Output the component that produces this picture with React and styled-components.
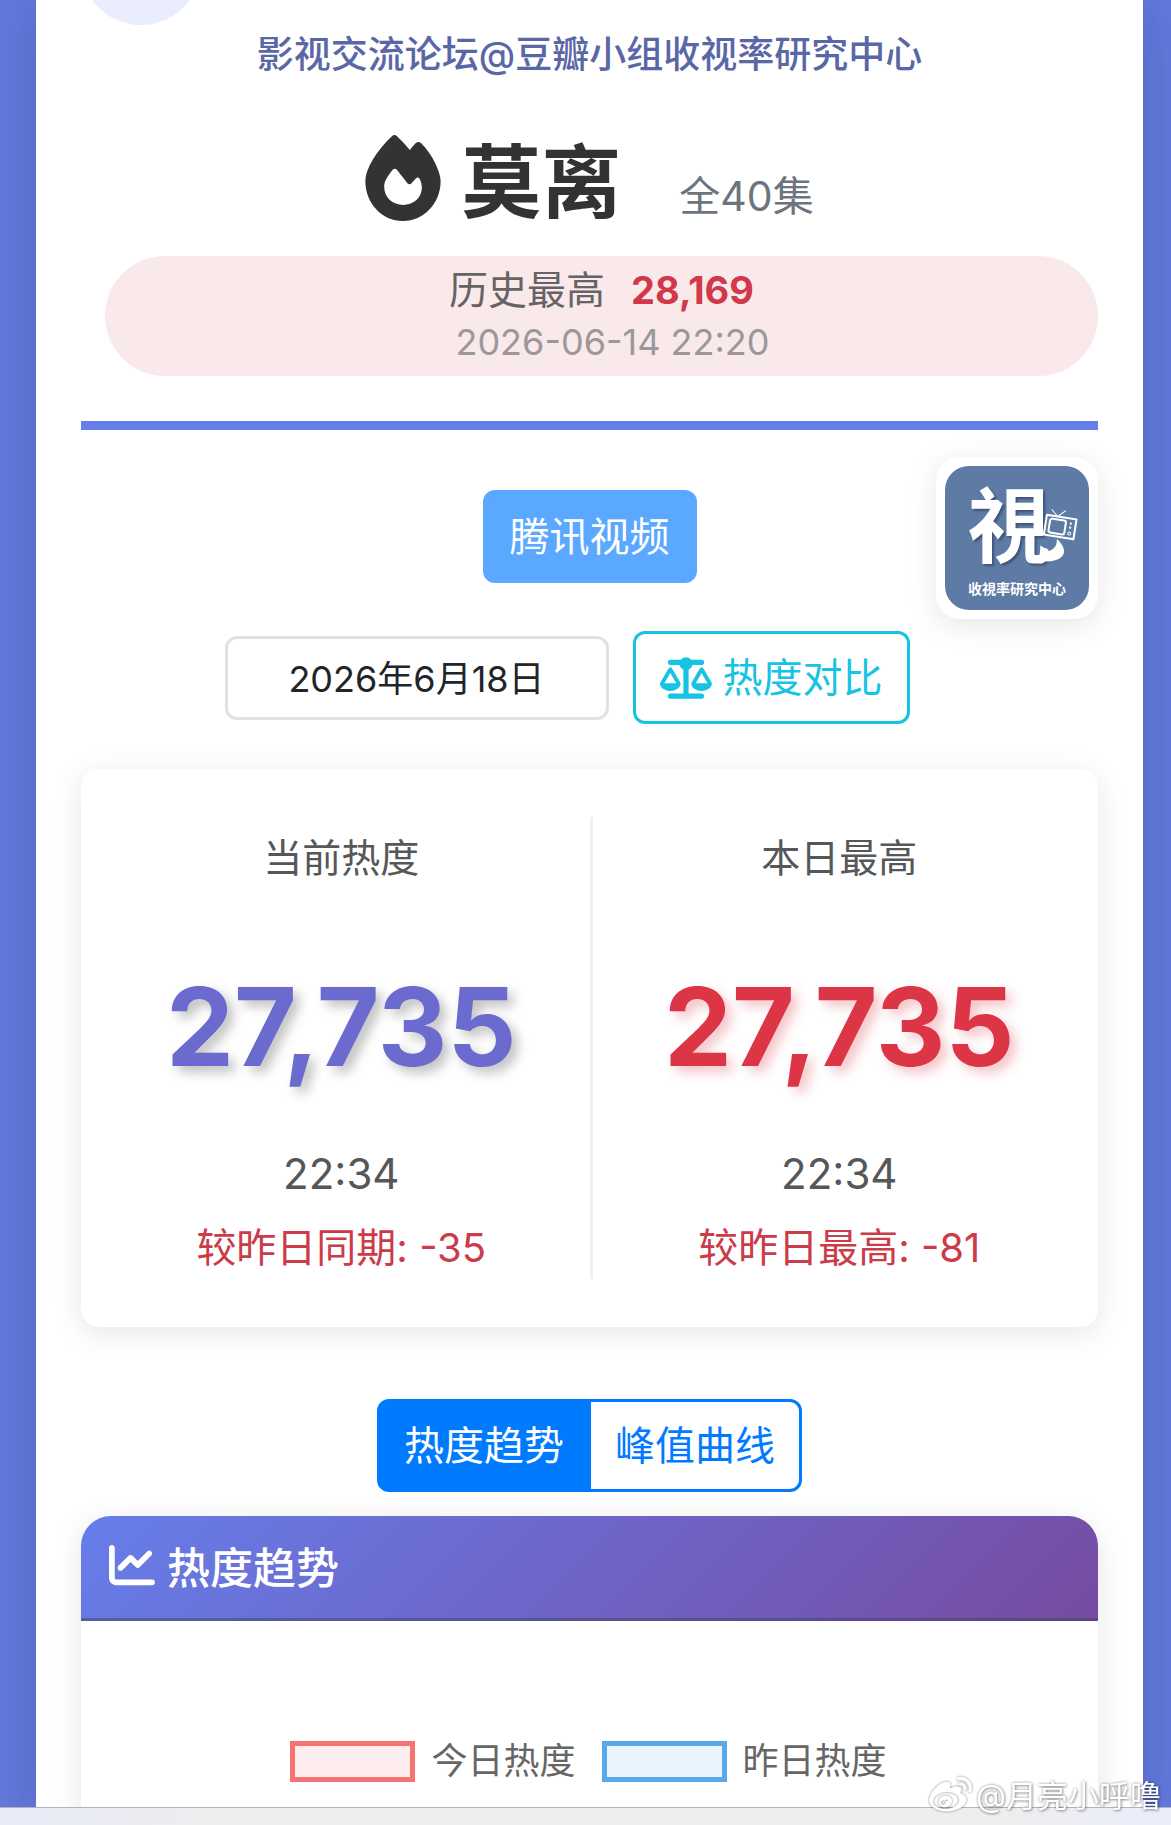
import styled, { createGlobalStyle, css } from "styled-components";
import { FaFire, FaScaleBalanced, FaChartLine, FaWeibo } from "react-icons/fa6";

const theme = {
  colors: {
    primary: "#667eea",
    blue: "#007bff",
    sky: "#5aa8ff",
    cyan: "#17c3e2",
    red: "#dc3545",
    purple: "#6b6bcf",
    dark: "#333333",
    text: "#555759",
    muted: "#6c757d",
    border: "#dee2e6",
    white: "#ffffff",
  },
  gradient: "linear-gradient(135deg, #667eea 0%, #764ba2 100%)",
  radius: { small: "12px", medium: "18px", large: "30px" },
  shadow: "0 6px 30px rgba(0, 0, 0, 0.1)",
};

const stats = [
  {
    id: "current",
    label: "当前热度",
    value: "27,735",
    time: "22:34",
    delta: "较昨日同期: -35",
    color: theme.colors.purple,
    glow: "rgba(0, 0, 0, 0.25)",
  },
  {
    id: "highest",
    label: "本日最高",
    value: "27,735",
    time: "22:34",
    delta: "较昨日最高: -81",
    color: theme.colors.red,
    glow: "rgba(220, 53, 69, 0.3)",
  },
];

const legends = [
  { id: "today", label: "今日热度", color: "#f87272", fill: "#fdedef" },
  { id: "yesterday", label: "昨日热度", color: "#59a9ea", fill: "#eaf4fc" },
];

export default function App() {
  return (
    <PageStyled>
      <GlobalStyle />
      <PanelStyled>
        <Header />
        <Toolbar />
        <StatsStyled>
          {stats.map((stat) => (
            <Stat key={stat.id} {...stat} />
          ))}
        </StatsStyled>
        <TabsStyled>
          <TabButton $isActive>热度趋势</TabButton>
          <TabButton>峰值曲线</TabButton>
        </TabsStyled>
        <ChartCard />
      </PanelStyled>
      <BottomBar />
      <WatermarkStyled>
        <FaWeibo className="icon" />
        <span>@月亮小呼噜</span>
      </WatermarkStyled>
    </PageStyled>
  );
}

function Header() {
  return (
    <HeaderStyled>
      <div className="bubble" />
      <p className="source">影视交流论坛@豆瓣小组收视率研究中心</p>
      <div className="title-row">
        <FaFire className="icon" />
        <h1>莫离</h1>
        <span className="episodes">全40集</span>
      </div>
      <div className="record">
        <div className="record-line">
          <span>历史最高</span>
          <strong>28,169</strong>
        </div>
        <div className="record-date">2026-06-14 22:20</div>
      </div>
    </HeaderStyled>
  );
}

function Toolbar() {
  return (
    <ToolbarStyled>
      <PlatformButton>腾讯视频</PlatformButton>
      <div className="controls">
        <DateInput type="text" aria-label="日期" defaultValue="2026年6月18日" />
        <CompareButton>
          <FaScaleBalanced className="icon" />
          <span>热度对比</span>
        </CompareButton>
      </div>
      <LogoStyled>
        <Logo />
      </LogoStyled>
    </ToolbarStyled>
  );
}

function Logo() {
  return (
    <svg viewBox="0 0 144 144" role="img" aria-label="收視率研究中心">
      <rect width="144" height="144" rx="24" fill="#5e7ba6" />
      <text x="23" y="90" className="mark" fill="#fff">
        視
      </text>
      {/* tail of the last stroke, running under the television */}
      <path
        d="M96 95 C110 97 120 92 119 84 C118 79 115 76 112 73 C112 81 108 86 96 86 Z"
        fill="#fff"
      />
      <g
        transform="rotate(9 115 62)"
        fill="none"
        stroke="#fff"
        strokeWidth="2"
        strokeLinejoin="round"
      >
        <path d="M104 45 L111 51 L118 44" strokeWidth="1" />
        <rect x="100" y="51" width="30" height="20" fill="#5e7ba6" />
        <rect x="104" y="54" width="16" height="14" rx="2" />
        <circle cx="125" cy="66" r="1.5" strokeWidth="1" />
        <path d="M124 56h2M124 60h2" />
      </g>
      <text x="72" y="128" textAnchor="middle" className="name" fill="#fff">
        收視率研究中心
      </text>
    </svg>
  );
}

function Stat({ label, value, time, delta, color, glow }) {
  return (
    <StatStyled $color={color} $glow={glow}>
      <div className="label">{label}</div>
      <div className="value">{value}</div>
      <div className="time">{time}</div>
      <div className="delta">{delta}</div>
    </StatStyled>
  );
}

function ChartCard() {
  return (
    <ChartCardStyled>
      <h2>
        <FaChartLine className="icon" />
        <span>热度趋势</span>
      </h2>
      <div className="legends">
        {legends.map(({ id, label, color, fill }) => (
          <LegendStyled key={id} $color={color} $fill={fill}>
            <i />
            <span>{label}</span>
          </LegendStyled>
        ))}
      </div>
    </ChartCardStyled>
  );
}

const GlobalStyle = createGlobalStyle`
  * {
    box-sizing: border-box;
  }

  body {
    margin: 0;
    background: #637adf;
    font-family: Inter, "Noto Sans CJK SC", sans-serif;
  }

  h1, h2, p {
    margin: 0;
  }

  button, input {
    font-family: inherit;
  }
`;

const PageStyled = styled.div`
  height: 100vh;
  display: flex;
  padding: 0 28px 0 36px;
  overflow: hidden;
`;

const PanelStyled = styled.main`
  flex: 1;
  min-width: 0;
  display: flex;
  flex-direction: column;
  padding: 0 45px;
  background: ${theme.colors.white};
  box-shadow: 0 0 60px rgba(0, 0, 0, 0.16);
`;

const HeaderStyled = styled.header`
  position: relative;
  padding: 30px 0 45px;
  border-bottom: 9px solid ${theme.colors.primary};
  text-align: center;

  .bubble {
    position: absolute;
    top: -95px;
    left: 0;
    width: 120px;
    height: 120px;
    border-radius: 50%;
    background: #e9edfc;
  }

  .source {
    font-size: 37px;
    line-height: 50px;
    font-weight: 500;
    color: #5a67a6;
  }

  .title-row {
    display: flex;
    justify-content: center;
    align-items: flex-end;
    margin-top: 54px;
    color: ${theme.colors.dark};

    .icon {
      width: 76px;
      height: 86px;
      margin: 0 20px 9px 0;
    }

    h1 {
      font-size: 80px;
      line-height: 96px;
      font-weight: 700;
    }

    .episodes {
      margin-left: 58px;
      font-size: 41px;
      line-height: 68px;
      color: ${theme.colors.muted};
    }
  }

  .record {
    margin: 26px 0 0 24px;
    padding: 8px 0;
    border-radius: 60px;
    background: #fae9eb;
    line-height: 52px;
  }

  .record-line {
    display: flex;
    justify-content: center;
    gap: 26px;
    font-size: 39px;
    color: #666364;

    strong {
      font-size: 38px;
      font-weight: 700;
      color: #d1394a;
    }
  }

  .record-date {
    padding-left: 22px;
    font-size: 36px;
    color: #9c9899;
  }
`;

const ToolbarStyled = styled.section`
  position: relative;
  display: flex;
  flex-direction: column;
  align-items: center;
  gap: 48px;
  padding: 60px 0 45px;

  .controls {
    display: flex;
    align-items: center;
    gap: 24px;
    margin-right: 45px;
  }
`;

const buttonStyle = css`
  height: 93px;
  padding: 0 24px;
  border: 3px solid;
  border-radius: ${theme.radius.small};
  font-size: 40px;
  line-height: 60px;
  cursor: pointer;
`;

const PlatformButton = styled.button`
  ${buttonStyle}
  border-color: ${theme.colors.sky};
  background: ${theme.colors.sky};
  color: ${theme.colors.white};
`;

const CompareButton = styled.button`
  ${buttonStyle}
  display: flex;
  align-items: center;
  gap: 11px;
  border-color: ${theme.colors.cyan};
  background: ${theme.colors.white};
  color: ${theme.colors.cyan};

  .icon {
    width: 52px;
    height: 42px;
  }
`;

const DateInput = styled.input`
  width: 384px;
  height: 84px;
  padding: 0 0 4px;
  border: 3px solid ${theme.colors.border};
  border-radius: ${theme.radius.small};
  background: ${theme.colors.white};
  font-size: 36px;
  text-align: center;
  color: #212529;
  outline: none;
`;

/* sits on top of the toolbar, in its right corner */
const LogoStyled = styled.div`
  position: absolute;
  top: 27px;
  right: 0;
  width: 162px;
  height: 162px;
  padding: 9px;
  border-radius: 24px;
  background: ${theme.colors.white};
  box-shadow: ${theme.shadow};

  svg {
    display: block;
    width: 100%;
    height: 100%;
    overflow: visible;
  }

  .mark {
    font-size: 82px;
    font-weight: 700;
    font-family: "Noto Sans CJK TC", sans-serif;
    filter: drop-shadow(2px 2px 1px rgba(40, 55, 90, 0.6));
  }

  .name {
    font-size: 14px;
    font-weight: 700;
    font-family: "Noto Sans CJK TC", sans-serif;
  }
`;

const StatsStyled = styled.section`
  display: grid;
  grid-template-columns: 1fr 1fr;
  padding: 48px 12px;
  border-radius: ${theme.radius.medium};
  background: ${theme.colors.white};
  box-shadow: ${theme.shadow};
`;

const StatStyled = styled.div`
  padding: 17px 0 7px;
  text-align: center;
  line-height: 48px;
  color: ${theme.colors.text};

  & + & {
    border-left: 3px solid #f0f0f1;
  }

  .label {
    font-size: 39px;
  }

  .value {
    margin: 85px 0 63px;
    font-size: 108px;
    line-height: 120px;
    font-weight: 700;
    color: ${({ $color }) => $color};
    text-shadow: 6px 6px 12px ${({ $glow }) => $glow};
  }

  .time {
    font-size: 42px;
  }

  .delta {
    margin-top: 26px;
    font-size: 40px;
    color: #cb3b49;
  }
`;

const TabsStyled = styled.div`
  display: flex;
  justify-content: center;
  margin: 72px 0 24px;
`;

const TabButton = styled.button`
  ${buttonStyle}
  border-color: ${theme.colors.blue};
  background: ${theme.colors.white};
  color: ${theme.colors.blue};

  &:first-child {
    border-top-right-radius: 0;
    border-bottom-right-radius: 0;
  }

  &:last-child {
    margin-left: -3px;
    border-top-left-radius: 0;
    border-bottom-left-radius: 0;
  }

  ${({ $isActive }) => $isActive && activeTabStyle}
`;

const activeTabStyle = css`
  position: relative;
  background: ${theme.colors.blue};
  color: ${theme.colors.white};
`;

const ChartCardStyled = styled.section`
  flex: 1;
  border-radius: ${theme.radius.large} ${theme.radius.large} 0 0;
  background: ${theme.colors.white};
  box-shadow: ${theme.shadow};

  h2 {
    display: flex;
    align-items: center;
    gap: 12px;
    height: 105px;
    padding: 0 28px 4px;
    border-bottom: 3px solid rgba(60, 60, 80, 0.45);
    border-radius: ${theme.radius.large} ${theme.radius.large} 0 0;
    background: ${theme.gradient};
    font-size: 43px;
    font-weight: 500;
    color: ${theme.colors.white};

    .icon {
      width: 46px;
      height: 46px;
    }
  }

  .legends {
    display: flex;
    justify-content: center;
    gap: 26px;
    padding: 120px 2px 0 0;
  }
`;

const LegendStyled = styled.div`
  display: flex;
  align-items: center;
  gap: 16px;
  font-size: 36px;
  line-height: 41px;
  color: #666666;

  i {
    width: 125px;
    height: 41px;
    border: 5px solid ${({ $color }) => $color};
    background: ${({ $fill }) => $fill};
  }
`;

const BottomBar = styled.footer`
  position: fixed;
  bottom: 0;
  left: 0;
  right: 0;
  height: 18px;
  border-top: 1px solid #b4b4b8;
  background: linear-gradient(90deg, #e8eaf7 0, #eeeeee 20%, #eeeeee 85%, #ebedfb 100%);
`;

const WatermarkStyled = styled.div`
  position: fixed;
  right: 10px;
  bottom: 8px;
  display: flex;
  align-items: center;
  gap: 4px;
  font-size: 31px;
  line-height: 40px;
  color: ${theme.colors.white};
  text-shadow: 0 0 3px rgba(0, 0, 0, 0.4), 1px 1px 3px rgba(0, 0, 0, 0.3);

  .icon {
    width: 43px;
    height: 43px;
    filter: drop-shadow(0 0 1px rgba(0, 0, 0, 0.5));
  }
`;
